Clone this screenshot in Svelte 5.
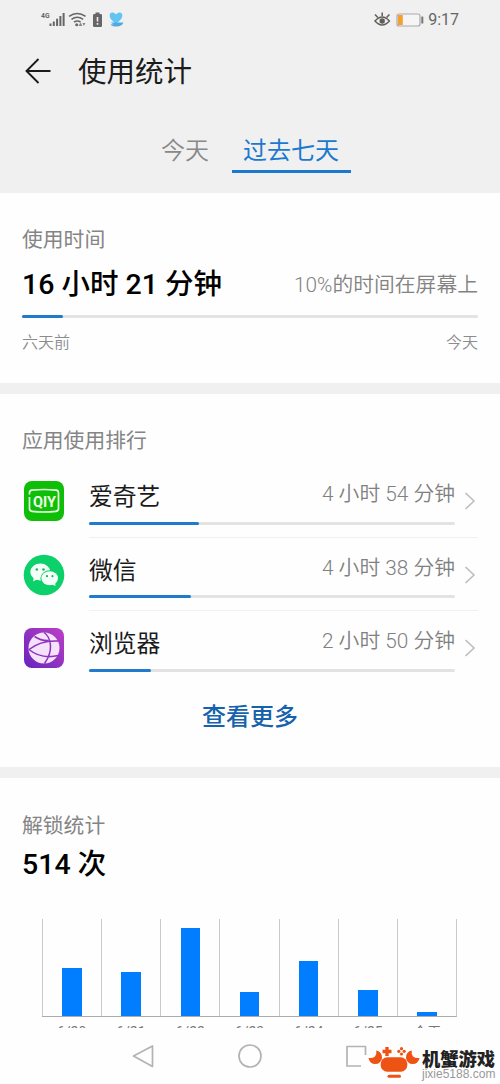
<script>
    const tabs = [
        { label: "今天", active: false },
        { label: "过去七天", active: true },
    ];

    const apps = [
        { name: "爱奇艺", time: "4 小时 54 分钟", icon: "iqiyi", percent: 30 },
        { name: "微信", time: "4 小时 38 分钟", icon: "wechat", percent: 28 },
        { name: "浏览器", time: "2 小时 50 分钟", icon: "browser", percent: 17 },
    ];

    const unlocks = [
        { day: "6/20", height: 48 },
        { day: "6/21", height: 44 },
        { day: "6/22", height: 88.5 },
        { day: "6/23", height: 24.5 },
        { day: "6/24", height: 55 },
        { day: "6/25", height: 26 },
        { day: "今天", height: 4 },
    ];
</script>

<div class="screen">
    <header class="header">
        <div class="status-bar">
            <svg width="86" height="18" viewBox="0 0 86 18">
                <text x="0" y="8" textLength="8.5" lengthAdjust="spacingAndGlyphs" class="network">4G</text>
                <g fill="#666">
                    <rect x="8.5" y="13.5" width="2" height="2.5" />
                    <rect x="11.8" y="11.5" width="2" height="4.5" />
                    <rect x="15.1" y="8.7" width="2" height="7.3" />
                    <rect x="18.4" y="6" width="2" height="10" />
                    <rect x="21.6" y="3" width="2" height="13" />
                    <circle cx="35.7" cy="14.7" r="1.5" />
                    <path d="M39.5 12.5l2 3.5h-4zM43 16l-1.6-3h3z" opacity="0.75" />
                    <rect x="54.5" y="2.5" width="4" height="2" />
                    <rect x="52" y="4" width="9" height="13" rx="1.3" />
                </g>
                <path
                    d="M28 6.3q8.3-5.5 16.6 0M30.5 9.3q5.8-4 11.6 0M33 12.2q3.3-2.3 6.6 0"
                    fill="none" stroke="#666" stroke-width="1.6" />
                <path d="M56.5 7v4.5M56.5 13v1.8" stroke="#eee" stroke-width="1.6" />
                <path d="M75 13.500C64 6.500 69.500-1 75 4.500 80.500-1 86 6.500 75 13.500z" fill="#62c4f1" />
                <path d="M69.500 12.500h13q-1.500 4-7 4-4.500 0-6-2l3-.3z" fill="#4fa9e4" />
            </svg>
            <div class="status-right">
                <svg width="50" height="18" viewBox="0 0 50 18">
                    <g fill="none" stroke="#5d5f59" stroke-width="1.5">
                        <path d="M1 11q7.200-8 14.400 0-7.200 8-14.400 0z" />
                        <path d="M8.200 6V2.500M3.800 7.500L1 4.500M12.600 7.500l2.800-3" />
                    </g>
                    <circle cx="8.2" cy="11" r="2.7" fill="#5d5f59" />
                    <rect x="23" y="4" width="23" height="12" rx="2" fill="#f5f5f5" stroke="#a9a9a9" stroke-width="1.2" />
                    <rect x="24" y="5" width="4.8" height="10" fill="#f2a12e" />
                    <rect x="47.3" y="6.5" width="2" height="7" rx="0.5" fill="#777" />
                </svg>
                <span class="clock">9:17</span>
            </div>
        </div>

        <div class="title-bar">
            <svg width="26" height="26" viewBox="0 0 26 26" fill="none" stroke="#1b1b1b" stroke-width="1.9">
                <path d="M25.500 13H1.500M13.500 1L1.500 13l12 12" />
            </svg>
            <h1>使用统计</h1>
        </div>

        <nav class="tabs">
            {#each tabs as tab}
                <span class="tab" class:active={tab.active}>{tab.label}</span>
            {/each}
        </nav>
    </header>

    <section class="usage">
        <h2>使用时间</h2>
        <div class="usage-row">
            <strong class="total">16 小时 21 分钟</strong>
            <span class="share">10%的时间在屏幕上</span>
        </div>
        <div class="track">
            <div class="fill" style="width: 9%"></div>
        </div>
        <div class="range">
            <span>六天前</span>
            <span>今天</span>
        </div>
    </section>

    <section class="ranking">
        <h2>应用使用排行</h2>
        {#each apps as app}
            <div class="app">
                <svg class="app-icon" width="42" height="42" viewBox="0 0 42 42">
                    {#if app.icon === "iqiyi"}
                        <rect x="1" y="1" width="40" height="40" rx="8" fill="#0fbe06" />
                        <path
                            d="M6.500 14.500V13Q6.500 10.500 9 10.200q12-1.400 24 0 2.500.3 2.500 2.800v15.500q0 2.500-2.500 2.800-12 1.400-24 0-2.500-.3-2.500-2.800V17"
                            fill="none" stroke="#e9ffe5" stroke-width="1.7" />
                        <text x="10" y="26.8" textLength="23" lengthAdjust="spacingAndGlyphs" class="qiy">QIY</text>
                    {:else if app.icon === "wechat"}
                        <circle cx="21" cy="21" r="20.3" fill="#0cd069" />
                        <ellipse cx="17.3" cy="18" rx="10" ry="8.5" fill="#f4fff8" />
                        <path d="M11 23l-1 4.500 5-2.500z" fill="#f4fff8" />
                        <ellipse cx="26.7" cy="24.3" rx="9.3" ry="8" fill="#0cd069" />
                        <ellipse cx="26.7" cy="24.3" rx="8.3" ry="7" fill="#f4fff8" />
                        <path d="M28 30l4.500 2-.5-4z" fill="#f4fff8" />
                        <g fill="#18b765">
                            <circle cx="13.8" cy="15.5" r="1.3" />
                            <circle cx="20.5" cy="15.5" r="1.3" />
                            <circle cx="24" cy="22.2" r="1.1" />
                            <circle cx="29.5" cy="22.2" r="1.1" />
                        </g>
                    {:else}
                        <defs>
                            <linearGradient id="purple" x1="0" y1="1" x2="1" y2="0">
                                <stop offset="0" stop-color="#6525bd" />
                                <stop offset="1" stop-color="#bd3fc5" />
                            </linearGradient>
                        </defs>
                        <rect x="1" y="1" width="40" height="40" rx="8" fill="url(#purple)" />
                        <circle cx="21" cy="21" r="15.5" fill="#f3e2fa" />
                        <path
                            d="M21 5.500q6 4 6.500 13t-6 18M6 22.500q12-9.500 29.500-8.500M6 22.500q12 10 29.500 6M11.500 9.500q7 4.500 14 4"
                            fill="none" stroke="#8e31bf" stroke-width="1.5" />
                    {/if}
                </svg>
                <div class="app-content">
                    <div class="app-main">
                        <div class="app-row">
                            <span class="app-name">{app.name}</span>
                            <span class="app-time">{app.time}</span>
                        </div>
                        <div class="track">
                            <div class="fill" style="width: {app.percent}%"></div>
                        </div>
                    </div>
                    <svg class="chevron" width="12" height="20" viewBox="0 0 12 20" fill="none" stroke="#bdbdbd" stroke-width="1.6">
                        <path d="M1.500 2l8.500 8-8.500 8" />
                    </svg>
                </div>
            </div>
        {/each}
        <div class="more">查看更多</div>
    </section>

    <section class="unlock">
        <h2>解锁统计</h2>
        <strong class="total">514 次</strong>
        <div class="chart">
            {#each unlocks as item}
                <div class="column">
                    <div class="bar" style="height: {item.height}px"></div>
                </div>
            {/each}
        </div>
        <div class="days">
            {#each unlocks as item}
                <span>{item.day}</span>
            {/each}
        </div>
    </section>

    <footer class="nav-bar">
        <svg width="240" height="28" viewBox="0 0 240 28" fill="none" stroke="#b3b3b3" stroke-width="1.7" stroke-linejoin="round">
            <path d="M20.500 4v20.500L1.500 14z" />
            <circle cx="118" cy="14" r="11" />
            <path d="M229 24h-14V4.500h18.500V13" />
        </svg>
    </footer>

    <div class="watermark">
        <svg width="54" height="38" viewBox="0 0 54 38" fill="#ed5413">
            <rect x="12.7" y="11.3" width="26.6" height="14.4" rx="6.5" />
            <path d="M8.300 4.600A6.800 6.800 0 1 1 .5 12q4 .5 6.500-1.500 1.800-2.500 1.300-5.900z" />
            <path d="M43.700 4.600A6.800 6.800 0 1 0 51.500 12q-4 .5-6.500-1.500-1.800-2.500-1.300-5.900z" />
            <path d="M17.300 1h3.400v2.800h2.800v3.400h-2.800V10h-3.400V7.200h-2.800V3.800h2.800z" />
            <circle cx="33.5" cy="2.7" r="1.6" />
            <circle cx="33.5" cy="8" r="1.6" />
            <circle cx="30.8" cy="5.3" r="1.6" />
            <circle cx="36.2" cy="5.3" r="1.6" />
            <rect x="19.5" y="28.7" width="13.5" height="3" rx="1.5" />
        </svg>
        <div class="watermark-text">
            <b>机蟹游戏</b>
            <span>jixie5188.com</span>
        </div>
    </div>
</div>

<style>
    :global(body) {
        margin: 0;
        background: #fefefe;
    }

    .screen {
        position: relative;
        width: 500px;
        height: 1084px;
        overflow: hidden;
        background: #fefefe;
        font-family: Roboto, "Noto Sans CJK SC", sans-serif;
        color: #000;
    }

    .header {
        height: 193px;
        background: #f0f0f0;
    }

    .status-bar {
        display: flex;
        justify-content: space-between;
        align-items: center;
        height: 37px;
        padding: 0 41px;
    }

    .network {
        font-size: 8px;
        font-weight: 700;
        fill: #666;
    }

    .status-right {
        display: flex;
        align-items: center;
        gap: 4px;
    }

    .clock {
        padding-top: 1px;
        font-size: 16px;
        color: #666;
    }

    .title-bar {
        display: flex;
        align-items: center;
        gap: 27px;
        height: 67px;
        padding-left: 25px;
    }

    h1 {
        margin: 4px 0 0;
        font-size: 28.5px;
        line-height: 40px;
        font-weight: 400;
        color: #1b1b1b;
    }

    .tabs {
        display: flex;
        justify-content: center;
        gap: 11px;
        padding-top: 28px;
    }

    .tab {
        height: 38px;
        padding: 0 11.5px;
        border-bottom: 3px solid transparent;
        font-size: 24px;
        line-height: 39px;
        color: #888;
    }

    .tab.active {
        border-color: #1b79cf;
        color: #1b79cf;
    }

    .tab:not(.active) {
        font-weight: 350;
    }

    section {
        box-sizing: border-box;
        padding: 0 22px;
    }

    h2 {
        margin: 0;
        font-size: 20.8px;
        line-height: 30px;
        font-weight: 400;
        color: #858585;
    }

    .total {
        font-size: 28.5px;
        line-height: 40px;
        font-weight: 500;
    }

    .track {
        height: 3px;
        border-radius: 2px;
        background: #e3e3e3;
    }

    .fill {
        height: 100%;
        border-radius: 2px;
        background: #1f7bcb;
    }

    .usage {
        height: 190px;
        padding-top: 32px;
    }

    .usage-row {
        display: flex;
        justify-content: space-between;
        align-items: center;
        height: 60px;
    }

    .share {
        padding-bottom: 4px;
        font-size: 20.8px;
        font-weight: 350;
        color: #828282;
    }

    .range {
        display: flex;
        justify-content: space-between;
        margin-top: 13px;
        font-size: 16px;
        line-height: 24px;
        font-weight: 350;
        color: #8c8c8c;
    }

    .ranking {
        height: 395px;
        padding-top: 32px;
        border-top: 11px solid #f0f0f0;
        border-bottom: 11px solid #f0f0f0;
    }

    .ranking h2 {
        margin-bottom: 8px;
    }

    .app {
        display: flex;
        gap: 24px;
        height: 73.7px;
    }

    .app-icon {
        flex: none;
        margin: 16px 0 0 1px;
    }

    .app-content {
        display: flex;
        flex: 1;
        gap: 9px;
        box-sizing: border-box;
        border-bottom: 1px solid #f0f0f0;
    }

    .app:nth-last-child(2) .app-content {
        border-bottom: 0;
    }

    .app-main {
        flex: 1;
    }

    .app-row {
        display: flex;
        justify-content: space-between;
        height: 57.5px;
    }

    .app-name {
        font-size: 23.8px;
        line-height: 67px;
        color: #1b1b1b;
    }

    .app-time {
        font-size: 20.8px;
        line-height: 60px;
        font-weight: 350;
        color: #808080;
    }

    .qiy {
        font-size: 14.5px;
        font-weight: 700;
        fill: #e9ffe5;
    }

    .chevron {
        margin: 27px 2px 0 0;
    }

    .more {
        margin-top: 12px;
        text-align: center;
        font-size: 24px;
        line-height: 41px;
        font-weight: 500;
        color: #1762ac;
    }

    .unlock {
        height: 250px;
        overflow: hidden;
        padding-top: 33px;
    }

    .unlock .total {
        display: block;
        padding-top: 4px;
    }

    .chart {
        display: flex;
        box-sizing: border-box;
        width: 415px;
        height: 98px;
        margin: 34px 0 0 20px;
        border-right: 1px solid #c9c9c9;
        border-bottom: 1px solid #ababab;
    }

    .column {
        display: flex;
        flex: 1;
        justify-content: center;
        align-items: flex-end;
        border-left: 1px solid #c9c9c9;
    }

    .bar {
        width: 19.5px;
        background: #017eff;
    }

    /* the labels run under the navigation bar */
    .days {
        display: flex;
        width: 415px;
        margin: 5px 0 0 20px;
        font-size: 14px;
        line-height: 20px;
        color: #777;
    }

    .days span {
        flex: 1;
        text-align: center;
    }

    .nav-bar {
        padding: 14px 0 0 132px;
    }

    /* site stamp laid over the bottom right corner */
    .watermark {
        position: absolute;
        right: 0;
        bottom: 0;
        display: flex;
        width: 132px;
        height: 38px;
        background: #fefefe;
    }

    .watermark svg {
        flex: none;
    }

    .watermark-text {
        display: flex;
        flex-direction: column;
    }

    .watermark-text b {
        height: 22px;
        font-size: 18.3px;
        line-height: 27px;
        font-weight: 900;
        color: #222;
    }

    .watermark-text span {
        font-family: "Liberation Sans", sans-serif;
        font-size: 12px;
        line-height: 12px;
        color: #999;
    }
</style>
